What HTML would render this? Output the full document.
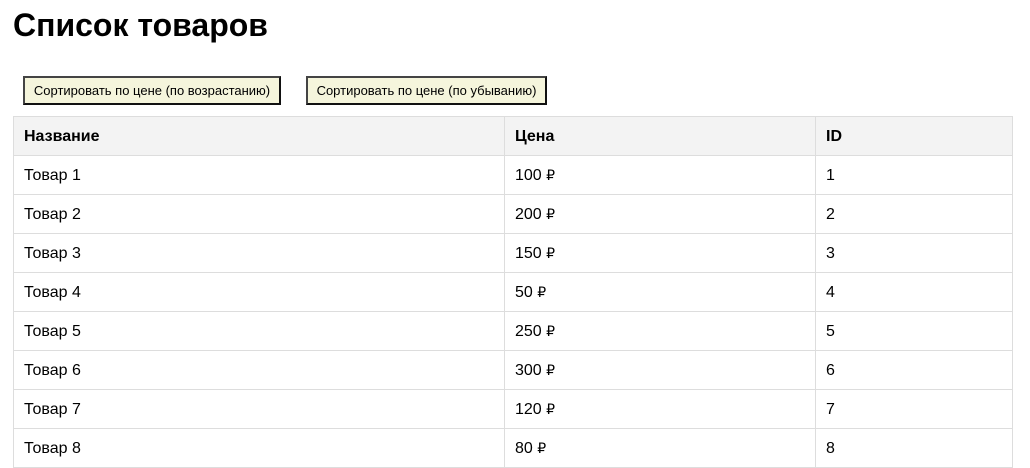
<!DOCTYPE html>
<html><head><meta charset="utf-8"><style>
body{margin:0;background:#fff;font-family:"Liberation Sans",Arial,sans-serif;color:#000;}
h1{position:absolute;left:13px;top:5px;margin:0;font-size:32px;font-weight:bold;line-height:40px;}
.btn{position:absolute;top:76px;height:29px;box-sizing:border-box;background:#f5f5dc;border:2px solid;border-color:#444 #111 #111 #444;font:13px "Liberation Sans",Arial,sans-serif;line-height:25px;text-align:center;padding:0;}
table{position:absolute;left:13px;top:116px;width:1000px;border-collapse:collapse;font-size:16px;}
td,th{border:1px solid #ddd;padding:1px 0 0 10px;height:37px;text-align:left;line-height:18px;vertical-align:middle;}
th{background:#f3f3f3;font-weight:bold;}
.r{font-family:"DejaVu Sans",sans-serif;font-size:14px;line-height:10px;display:inline-block;vertical-align:baseline;}
</style></head><body>
<h1>Список товаров</h1>
<div class="btn" style="left:23px;width:258px">Сортировать по цене (по возрастанию)</div>
<div class="btn" style="left:306px;width:241px">Сортировать по цене (по убыванию)</div>
<table>
<colgroup><col style="width:491px"><col style="width:311px"><col></colgroup>
<tr><th>Название</th><th>Цена</th><th>ID</th></tr>
<tr><td>Товар 1</td><td>100 <span class="r">₽</span></td><td>1</td></tr>
<tr><td>Товар 2</td><td>200 <span class="r">₽</span></td><td>2</td></tr>
<tr><td>Товар 3</td><td>150 <span class="r">₽</span></td><td>3</td></tr>
<tr><td>Товар 4</td><td>50 <span class="r">₽</span></td><td>4</td></tr>
<tr><td>Товар 5</td><td>250 <span class="r">₽</span></td><td>5</td></tr>
<tr><td>Товар 6</td><td>300 <span class="r">₽</span></td><td>6</td></tr>
<tr><td>Товар 7</td><td>120 <span class="r">₽</span></td><td>7</td></tr>
<tr><td>Товар 8</td><td>80 <span class="r">₽</span></td><td>8</td></tr>
</table>
</body></html>
